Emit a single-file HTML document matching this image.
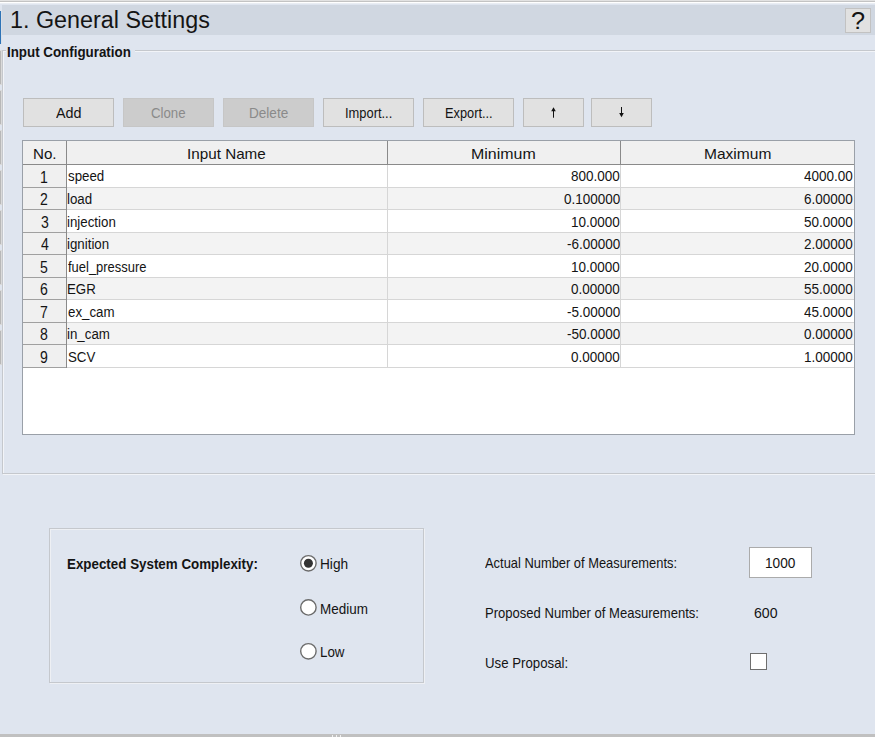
<!DOCTYPE html>
<html><head><meta charset="utf-8"><style>
html,body{margin:0;padding:0;}
body{width:875px;height:737px;overflow:hidden;position:relative;background:#dfe5ef;font-family:"Liberation Sans",sans-serif;}
.a{position:absolute;box-sizing:border-box;}
.t{position:absolute;white-space:nowrap;transform-origin:0 0;}
</style></head><body>
<div class="a" style="left:0px;top:0px;width:875px;height:1px;background:#e2e2e2;"></div>
<div class="a" style="left:0px;top:1px;width:875px;height:1px;background:#c3c3c3;"></div>
<div class="a" style="left:0px;top:2px;width:875px;height:1px;background:#ffffff;"></div>
<div class="a" style="left:0px;top:3px;width:875px;height:1px;background:#e9edf3;"></div>
<div class="a" style="left:2px;top:5px;width:873px;height:30px;background:#d0d7e1;"></div>
<div class="a" style="left:0px;top:11px;width:1px;height:33px;background:#2e73b6;"></div>
<div class="a" style="left:1px;top:11px;width:1px;height:33px;background:#d9dfe8;"></div>
<div class="t" style="left:9.57px;top:9.00px;font-size:23px;line-height:23px;color:#141414;transform:scaleX(1.0149);">1. General Settings</div>
<div class="a" style="left:845px;top:8px;width:26px;height:25px;background:#e1e1e1;border:1px solid #c2c2c2"></div>
<div class="t" style="left:850.70px;top:10.00px;font-size:23px;line-height:23px;color:#141414;transform:scaleX(1.1009);">?</div>
<div class="a" style="left:2px;top:50px;width:880px;height:424px;background:transparent;border:1px solid #c5c8cd;box-shadow:inset 1px 1px 0 #f2f4f8, 1px 1px 0 #f2f4f8"></div>
<div class="a" style="left:0px;top:50px;width:2px;height:35px;background:#dadada;"></div>
<div class="a" style="left:0px;top:51px;width:1px;height:33px;background:#b8b8b8;"></div>
<div class="a" style="left:0px;top:90px;width:2px;height:35px;background:#dadada;"></div>
<div class="a" style="left:0px;top:91px;width:1px;height:33px;background:#b8b8b8;"></div>
<div class="a" style="left:0px;top:130px;width:2px;height:35px;background:#dadada;"></div>
<div class="a" style="left:0px;top:131px;width:1px;height:33px;background:#b8b8b8;"></div>
<div class="a" style="left:0px;top:170px;width:2px;height:35px;background:#dadada;"></div>
<div class="a" style="left:0px;top:171px;width:1px;height:33px;background:#b8b8b8;"></div>
<div class="a" style="left:0px;top:210px;width:2px;height:35px;background:#dadada;"></div>
<div class="a" style="left:0px;top:211px;width:1px;height:33px;background:#b8b8b8;"></div>
<div class="a" style="left:0px;top:250px;width:2px;height:35px;background:#dadada;"></div>
<div class="a" style="left:0px;top:251px;width:1px;height:33px;background:#b8b8b8;"></div>
<div class="a" style="left:0px;top:290px;width:2px;height:35px;background:#dadada;"></div>
<div class="a" style="left:0px;top:291px;width:1px;height:33px;background:#b8b8b8;"></div>
<div class="a" style="left:0px;top:330px;width:2px;height:35px;background:#dadada;"></div>
<div class="a" style="left:0px;top:331px;width:1px;height:33px;background:#b8b8b8;"></div>
<div class="a" style="left:6px;top:44px;width:129px;height:14px;background:#dfe5ef;"></div>
<div class="t" style="left:7.34px;top:45.00px;font-size:14px;line-height:14px;font-weight:bold;color:#141414;transform:scaleX(0.9532);">Input Configuration</div>
<div class="a" style="left:23px;top:98px;width:91px;height:29px;background:#e1e1e1;border:1px solid #bdbdbd"></div>
<div class="t" style="left:56.40px;top:106.00px;font-size:14.5px;line-height:14.5px;color:#141414;transform:scaleX(0.9879);">Add</div>
<div class="a" style="left:123px;top:98px;width:91px;height:29px;background:#cccccc;border:1px solid #c6c6c6"></div>
<div class="t" style="left:151.36px;top:106.00px;font-size:14.5px;line-height:14.5px;color:#8a8a8a;transform:scaleX(0.9123);">Clone</div>
<div class="a" style="left:223px;top:98px;width:91px;height:29px;background:#cccccc;border:1px solid #c6c6c6"></div>
<div class="t" style="left:248.78px;top:106.00px;font-size:14.5px;line-height:14.5px;color:#8a8a8a;transform:scaleX(0.9352);">Delete</div>
<div class="a" style="left:323px;top:98px;width:91px;height:29px;background:#e1e1e1;border:1px solid #bdbdbd"></div>
<div class="t" style="left:345.04px;top:106.00px;font-size:14.5px;line-height:14.5px;color:#141414;transform:scaleX(0.8891);">Import...</div>
<div class="a" style="left:423px;top:98px;width:91px;height:29px;background:#e1e1e1;border:1px solid #bdbdbd"></div>
<div class="t" style="left:444.89px;top:106.00px;font-size:14.5px;line-height:14.5px;color:#141414;transform:scaleX(0.8816);">Export...</div>
<div class="a" style="left:523px;top:98px;width:61px;height:29px;background:#e1e1e1;border:1px solid #bdbdbd"></div>
<svg class="a" style="left:540px;top:100px" width="30" height="24" viewBox="540 100 30 24"><polygon points="553.5,107.2 555.8,111.2 551.2,111.2" fill="#111"/><rect x="553" y="110.5" width="1" height="7.2" fill="#111"/></svg>
<div class="a" style="left:591px;top:98px;width:61px;height:29px;background:#e1e1e1;border:1px solid #bdbdbd"></div>
<svg class="a" style="left:608px;top:100px" width="30" height="24" viewBox="608 100 30 24"><polygon points="621.5,117.3 619.2,113 623.8,113" fill="#111"/><rect x="621" y="107" width="1" height="7" fill="#111"/></svg>
<div class="a" style="left:22px;top:140px;width:833px;height:295px;background:#fff;border:1px solid #9aa0a8"></div>
<div class="a" style="left:23px;top:141px;width:831px;height:23px;background:#f0f0f0;"></div>
<div class="a" style="left:23px;top:165px;width:43px;height:202px;background:#f0f0f0;"></div>
<div class="a" style="left:67px;top:165px;width:787px;height:22px;background:#ffffff;"></div>
<div class="a" style="left:67px;top:187px;width:787px;height:1px;background:#d6d6d6;"></div>
<div class="a" style="left:23px;top:187px;width:43px;height:1px;background:#a0a0a0;"></div>
<div class="t" style="left:40.31px;top:170.00px;font-size:16px;line-height:16px;color:#141414;transform:scaleX(0.8800);">1</div>
<div class="t" style="left:67.92px;top:169.00px;font-size:14px;line-height:14px;color:#141414;transform:scaleX(0.9500);">speed</div>
<div class="t" style="left:571.05px;top:169.00px;font-size:14px;line-height:14px;color:#141414;transform:scaleX(0.9650);">800.000</div>
<div class="t" style="left:804.05px;top:169.00px;font-size:14px;line-height:14px;color:#141414;transform:scaleX(0.9650);">4000.00</div>
<div class="a" style="left:67px;top:188px;width:787px;height:21px;background:#f3f3f3;"></div>
<div class="a" style="left:67px;top:209px;width:787px;height:1px;background:#d6d6d6;"></div>
<div class="a" style="left:23px;top:209px;width:43px;height:1px;background:#a0a0a0;"></div>
<div class="t" style="left:40.48px;top:192.00px;font-size:16px;line-height:16px;color:#141414;transform:scaleX(0.8800);">2</div>
<div class="t" style="left:67.44px;top:192.00px;font-size:14px;line-height:14px;color:#141414;transform:scaleX(0.9500);">load</div>
<div class="t" style="left:563.52px;top:192.00px;font-size:14px;line-height:14px;color:#141414;transform:scaleX(0.9650);">0.100000</div>
<div class="t" style="left:804.05px;top:192.00px;font-size:14px;line-height:14px;color:#141414;transform:scaleX(0.9650);">6.00000</div>
<div class="a" style="left:67px;top:210px;width:787px;height:22px;background:#ffffff;"></div>
<div class="a" style="left:67px;top:232px;width:787px;height:1px;background:#d6d6d6;"></div>
<div class="a" style="left:23px;top:232px;width:43px;height:1px;background:#a0a0a0;"></div>
<div class="t" style="left:40.53px;top:215.00px;font-size:16px;line-height:16px;color:#141414;transform:scaleX(0.8800);">3</div>
<div class="t" style="left:67.44px;top:215.00px;font-size:14px;line-height:14px;color:#141414;transform:scaleX(0.9500);">injection</div>
<div class="t" style="left:571.05px;top:215.00px;font-size:14px;line-height:14px;color:#141414;transform:scaleX(0.9650);">10.0000</div>
<div class="t" style="left:804.05px;top:215.00px;font-size:14px;line-height:14px;color:#141414;transform:scaleX(0.9650);">50.0000</div>
<div class="a" style="left:67px;top:233px;width:787px;height:21px;background:#f3f3f3;"></div>
<div class="a" style="left:67px;top:254px;width:787px;height:1px;background:#d6d6d6;"></div>
<div class="a" style="left:23px;top:254px;width:43px;height:1px;background:#a0a0a0;"></div>
<div class="t" style="left:40.53px;top:237.00px;font-size:16px;line-height:16px;color:#141414;transform:scaleX(0.8800);">4</div>
<div class="t" style="left:67.44px;top:237.00px;font-size:14px;line-height:14px;color:#141414;transform:scaleX(0.9500);">ignition</div>
<div class="t" style="left:566.51px;top:237.00px;font-size:14px;line-height:14px;color:#141414;transform:scaleX(0.9650);">-6.00000</div>
<div class="t" style="left:804.05px;top:237.00px;font-size:14px;line-height:14px;color:#141414;transform:scaleX(0.9650);">2.00000</div>
<div class="a" style="left:67px;top:255px;width:787px;height:22px;background:#ffffff;"></div>
<div class="a" style="left:67px;top:277px;width:787px;height:1px;background:#d6d6d6;"></div>
<div class="a" style="left:23px;top:277px;width:43px;height:1px;background:#a0a0a0;"></div>
<div class="t" style="left:40.48px;top:260.00px;font-size:16px;line-height:16px;color:#141414;transform:scaleX(0.8800);">5</div>
<div class="t" style="left:68.11px;top:260.00px;font-size:14px;line-height:14px;color:#141414;transform:scaleX(0.9250);">fuel_pressure</div>
<div class="t" style="left:571.05px;top:260.00px;font-size:14px;line-height:14px;color:#141414;transform:scaleX(0.9650);">10.0000</div>
<div class="t" style="left:804.05px;top:260.00px;font-size:14px;line-height:14px;color:#141414;transform:scaleX(0.9650);">20.0000</div>
<div class="a" style="left:67px;top:278px;width:787px;height:21px;background:#f3f3f3;"></div>
<div class="a" style="left:67px;top:299px;width:787px;height:1px;background:#d6d6d6;"></div>
<div class="a" style="left:23px;top:299px;width:43px;height:1px;background:#a0a0a0;"></div>
<div class="t" style="left:40.44px;top:282.00px;font-size:16px;line-height:16px;color:#141414;transform:scaleX(0.8800);">6</div>
<div class="t" style="left:67.25px;top:282.00px;font-size:14px;line-height:14px;color:#141414;transform:scaleX(0.9500);">EGR</div>
<div class="t" style="left:571.05px;top:282.00px;font-size:14px;line-height:14px;color:#141414;transform:scaleX(0.9650);">0.00000</div>
<div class="t" style="left:804.05px;top:282.00px;font-size:14px;line-height:14px;color:#141414;transform:scaleX(0.9650);">55.0000</div>
<div class="a" style="left:67px;top:300px;width:787px;height:22px;background:#ffffff;"></div>
<div class="a" style="left:67px;top:322px;width:787px;height:1px;background:#d6d6d6;"></div>
<div class="a" style="left:23px;top:322px;width:43px;height:1px;background:#a0a0a0;"></div>
<div class="t" style="left:40.48px;top:305.00px;font-size:16px;line-height:16px;color:#141414;transform:scaleX(0.8800);">7</div>
<div class="t" style="left:67.73px;top:305.00px;font-size:14px;line-height:14px;color:#141414;transform:scaleX(0.9500);">ex_cam</div>
<div class="t" style="left:566.51px;top:305.00px;font-size:14px;line-height:14px;color:#141414;transform:scaleX(0.9650);">-5.00000</div>
<div class="t" style="left:804.05px;top:305.00px;font-size:14px;line-height:14px;color:#141414;transform:scaleX(0.9650);">45.0000</div>
<div class="a" style="left:67px;top:323px;width:787px;height:21px;background:#f3f3f3;"></div>
<div class="a" style="left:67px;top:344px;width:787px;height:1px;background:#d6d6d6;"></div>
<div class="a" style="left:23px;top:344px;width:43px;height:1px;background:#a0a0a0;"></div>
<div class="t" style="left:40.48px;top:327.00px;font-size:16px;line-height:16px;color:#141414;transform:scaleX(0.8800);">8</div>
<div class="t" style="left:67.44px;top:327.00px;font-size:14px;line-height:14px;color:#141414;transform:scaleX(0.9500);">in_cam</div>
<div class="t" style="left:566.51px;top:327.00px;font-size:14px;line-height:14px;color:#141414;transform:scaleX(0.9650);">-50.0000</div>
<div class="t" style="left:804.05px;top:327.00px;font-size:14px;line-height:14px;color:#141414;transform:scaleX(0.9650);">0.00000</div>
<div class="a" style="left:67px;top:345px;width:787px;height:22px;background:#ffffff;"></div>
<div class="a" style="left:67px;top:367px;width:787px;height:1px;background:#d6d6d6;"></div>
<div class="a" style="left:23px;top:367px;width:43px;height:1px;background:#a0a0a0;"></div>
<div class="t" style="left:40.48px;top:350.00px;font-size:16px;line-height:16px;color:#141414;transform:scaleX(0.8800);">9</div>
<div class="t" style="left:67.63px;top:350.00px;font-size:14px;line-height:14px;color:#141414;transform:scaleX(0.9500);">SCV</div>
<div class="t" style="left:571.05px;top:350.00px;font-size:14px;line-height:14px;color:#141414;transform:scaleX(0.9650);">0.00000</div>
<div class="t" style="left:804.05px;top:350.00px;font-size:14px;line-height:14px;color:#141414;transform:scaleX(0.9650);">1.00000</div>
<div class="a" style="left:23px;top:164px;width:831px;height:1px;background:#8a8a8a;"></div>
<div class="a" style="left:66px;top:141px;width:1px;height:227px;background:#8a8a8a;"></div>
<div class="a" style="left:387px;top:141px;width:1px;height:23px;background:#8a8a8a;"></div>
<div class="a" style="left:387px;top:165px;width:1px;height:203px;background:#d6d6d6;"></div>
<div class="a" style="left:620px;top:141px;width:1px;height:23px;background:#8a8a8a;"></div>
<div class="a" style="left:620px;top:165px;width:1px;height:203px;background:#d6d6d6;"></div>
<div class="t" style="left:32.79px;top:146.00px;font-size:15px;line-height:15px;color:#141414;transform:scaleX(1.0096);">No.</div>
<div class="t" style="left:187.38px;top:146.00px;font-size:15px;line-height:15px;color:#141414;transform:scaleX(1.0159);">Input Name</div>
<div class="t" style="left:471.32px;top:146.00px;font-size:15px;line-height:15px;color:#141414;transform:scaleX(1.0631);">Minimum</div>
<div class="t" style="left:703.66px;top:146.00px;font-size:15px;line-height:15px;color:#141414;transform:scaleX(1.0366);">Maximum</div>
<div class="a" style="left:49px;top:528px;width:375px;height:155px;background:transparent;border:1px solid #c5c8cd;box-shadow:inset 1px 1px 0 #eef0f4, 1px 1px 0 #eef0f4"></div>
<div class="t" style="left:66.84px;top:557.00px;font-size:14px;line-height:14px;font-weight:bold;color:#141414;transform:scaleX(0.9545);">Expected System Complexity:</div>
<svg class="a" style="left:296px;top:551px" width="25" height="25" viewBox="296 551 25 25"><circle cx="308.4" cy="563.30" r="7.7" fill="#fff" stroke="#6c6c6c" stroke-width="1.4"/><circle cx="308.40" cy="563.30" r="4.5" fill="#333"/></svg>
<div class="t" style="left:319.57px;top:557.00px;font-size:14.5px;line-height:14.5px;color:#141414;transform:scaleX(0.9422);">High</div>
<svg class="a" style="left:296px;top:595px" width="25" height="25" viewBox="296 595 25 25"><circle cx="308.4" cy="607.40" r="7.7" fill="#fff" stroke="#6c6c6c" stroke-width="1.4"/></svg>
<div class="t" style="left:319.79px;top:602.00px;font-size:14.5px;line-height:14.5px;color:#141414;transform:scaleX(0.9291);">Medium</div>
<svg class="a" style="left:296px;top:639px" width="25" height="25" viewBox="296 639 25 25"><circle cx="308.4" cy="651.30" r="7.7" fill="#fff" stroke="#6c6c6c" stroke-width="1.4"/></svg>
<div class="t" style="left:319.79px;top:645.00px;font-size:14.5px;line-height:14.5px;color:#141414;transform:scaleX(0.9213);">Low</div>
<div class="t" style="left:484.90px;top:556.00px;font-size:14.5px;line-height:14.5px;color:#141414;transform:scaleX(0.8891);">Actual Number of Measurements:</div>
<div class="a" style="left:749px;top:547px;width:63px;height:31px;background:#fff;border:1px solid #ababab"></div>
<div class="t" style="left:765.46px;top:556.00px;font-size:14.5px;line-height:14.5px;color:#141414;transform:scaleX(0.9412);">1000</div>
<div class="t" style="left:484.92px;top:606.00px;font-size:14.5px;line-height:14.5px;color:#141414;transform:scaleX(0.9001);">Proposed Number of Measurements:</div>
<div class="t" style="left:753.82px;top:606.00px;font-size:14.5px;line-height:14.5px;color:#141414;transform:scaleX(0.9738);">600</div>
<div class="t" style="left:484.90px;top:656.00px;font-size:14.5px;line-height:14.5px;color:#141414;transform:scaleX(0.9131);">Use Proposal:</div>
<div class="a" style="left:750px;top:653px;width:17px;height:17px;background:#fff;border:1.5px solid #6e6e6e"></div>
<div class="a" style="left:0px;top:734px;width:875px;height:3px;background:#c0c0c0;"></div>
<div class="a" style="left:332px;top:735px;width:1px;height:2px;background:#f2f2f2;"></div>
<div class="a" style="left:336px;top:735px;width:1px;height:2px;background:#f2f2f2;"></div>
<div class="a" style="left:340px;top:735px;width:1px;height:2px;background:#f2f2f2;"></div>
</body></html>
